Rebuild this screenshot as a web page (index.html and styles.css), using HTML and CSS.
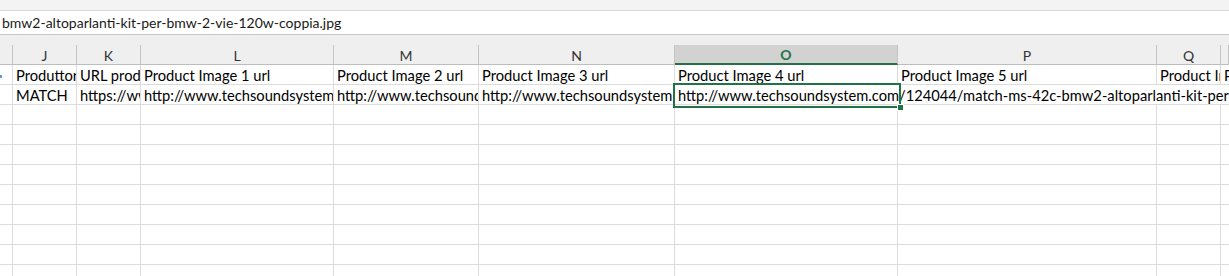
FILE: index.html
```html
<!DOCTYPE html>
<html>
<head>
<meta charset="utf-8">
<link rel="stylesheet" href="styles.css">
</head>
<body>
<div class="app">
  <div class="topband"></div>
  <div class="formulabar"><span class="ftext">bmw2-altoparlanti-kit-per-bmw-2-vie-120w-coppia.jpg</span></div>
  <div class="gap"></div>
  <div class="sheet">
    <div class="row hdr">
      <div class="c rh"></div>
      <div class="c">J</div>
      <div class="c">K</div>
      <div class="c">L</div>
      <div class="c">M</div>
      <div class="c">N</div>
      <div class="c sel">O</div>
      <div class="c">P</div>
      <div class="c">Q</div>
      <div class="c last"></div>
    </div>
    <div class="row">
      <div class="c rh"><span class="mark"></span></div>
      <div class="c">Produttore</div>
      <div class="c">URL prodotto</div>
      <div class="c">Product Image 1 url</div>
      <div class="c">Product Image 2 url</div>
      <div class="c">Product Image 3 url</div>
      <div class="c">Product Image 4 url</div>
      <div class="c">Product Image 5 url</div>
      <div class="c">Product Image 6 url</div>
      <div class="c last">Product</div>
    </div>
    <div class="row">
      <div class="c rh"></div>
      <div class="c">MATCH</div>
      <div class="c">https://www.techsoundsystem.com</div>
      <div class="c">http://www.techsoundsystem.com/</div>
      <div class="c">http://www.techsoundsystem.com/</div>
      <div class="c">http://www.techsoundsystem.com/</div>
      <div class="c spill">http://www.techsoundsystem.com/124044/match-ms-42c-bmw2-altoparlanti-kit-per-bmw-2-vie-120w-coppia.jpg<span class="selbox"><span class="handle"></span></span></div>
      <div class="c empty"></div>
      <div class="c empty"></div>
      <div class="c last empty"></div>
    </div>
    <div class="row"><div class="c rh"></div><div class="c"></div><div class="c"></div><div class="c"></div><div class="c"></div><div class="c"></div><div class="c"></div><div class="c"></div><div class="c"></div><div class="c last"></div></div>
    <div class="row"><div class="c rh"></div><div class="c"></div><div class="c"></div><div class="c"></div><div class="c"></div><div class="c"></div><div class="c"></div><div class="c"></div><div class="c"></div><div class="c last"></div></div>
    <div class="row"><div class="c rh"></div><div class="c"></div><div class="c"></div><div class="c"></div><div class="c"></div><div class="c"></div><div class="c"></div><div class="c"></div><div class="c"></div><div class="c last"></div></div>
    <div class="row"><div class="c rh"></div><div class="c"></div><div class="c"></div><div class="c"></div><div class="c"></div><div class="c"></div><div class="c"></div><div class="c"></div><div class="c"></div><div class="c last"></div></div>
    <div class="row"><div class="c rh"></div><div class="c"></div><div class="c"></div><div class="c"></div><div class="c"></div><div class="c"></div><div class="c"></div><div class="c"></div><div class="c"></div><div class="c last"></div></div>
    <div class="row"><div class="c rh"></div><div class="c"></div><div class="c"></div><div class="c"></div><div class="c"></div><div class="c"></div><div class="c"></div><div class="c"></div><div class="c"></div><div class="c last"></div></div>
    <div class="row"><div class="c rh"></div><div class="c"></div><div class="c"></div><div class="c"></div><div class="c"></div><div class="c"></div><div class="c"></div><div class="c"></div><div class="c"></div><div class="c last"></div></div>
    <div class="row"><div class="c rh"></div><div class="c"></div><div class="c"></div><div class="c"></div><div class="c"></div><div class="c"></div><div class="c"></div><div class="c"></div><div class="c"></div><div class="c last"></div></div>
    <div class="row"><div class="c rh"></div><div class="c"></div><div class="c"></div><div class="c"></div><div class="c"></div><div class="c"></div><div class="c"></div><div class="c"></div><div class="c"></div><div class="c last"></div></div>
  </div>
</div>
</body>
</html>
```
FILE: styles.css
```css
html, body {
  margin: 0;
  padding: 0;
  background: #ffffff;
  overflow: hidden;
}
.app {
  width: 1229px;
  height: 276px;
  overflow: hidden;
  font-family: Lato, "Liberation Sans", sans-serif;
  color: #000;
}
.topband {
  height: 10px;
  background: #f3f3f3;
}
.formulabar {
  height: 23px;
  border-top: 1px solid #dadada;
  border-bottom: 1px solid #c6c6c6;
  background: #fff;
  display: flex;
  align-items: center;
  padding-left: 2px;
}
.ftext {
  font-size: 14px;
  color: #1a1a1a;
  white-space: nowrap;
}
.gap {
  height: 10px;
  background: #efefef;
}
.row {
  display: grid;
  grid-template-columns: 13px 64px 64px 193px 145px 196px 223px 259px 64px 1fr;
  height: 20px;
}
.c {
  box-sizing: border-box;
  border-right: 1px solid #dcdcdc;
  border-bottom: 1px solid #dcdcdc;
  font-size: 14.7px;
  line-height: 17px;
  padding-top: 2px;
  padding-left: 3px;
  white-space: nowrap;
  overflow: hidden;
}
.c.last { border-right: none; }
.hdr .c {
  background: #efefef;
  text-align: center;
  padding-left: 0;
  color: #333;
  font-size: 14px;
  border-right: 1px solid #c4c4c4;
  border-bottom: 1px solid #bdbdbd;
  position: relative;
}
.hdr .c.sel {
  background: #d2d2d2;
  color: #217346;
  font-weight: bold;
  border-bottom: 2px solid #217346;
  line-height: 16px;
}
.rh {
  padding-left: 0;
  position: relative;
}
.mark {
  position: absolute;
  left: 0;
  top: 10px;
  width: 2px;
  height: 3px;
  background: #5b9bd5;
}
.spill {
  overflow: visible;
  position: relative;
  border-right: none;
  z-index: 2;
}
.empty {
  border-right: none;
}
.selbox {
  position: absolute;
  left: -2px;
  top: -2px;
  width: 224px;
  height: 21px;
  border: 2px solid #217346;
  box-sizing: content-box;
  pointer-events: none;
}
.handle {
  position: absolute;
  right: -5px;
  bottom: -5px;
  width: 5px;
  height: 5px;
  background: #217346;
  border: 1px solid #fff;
}
```
